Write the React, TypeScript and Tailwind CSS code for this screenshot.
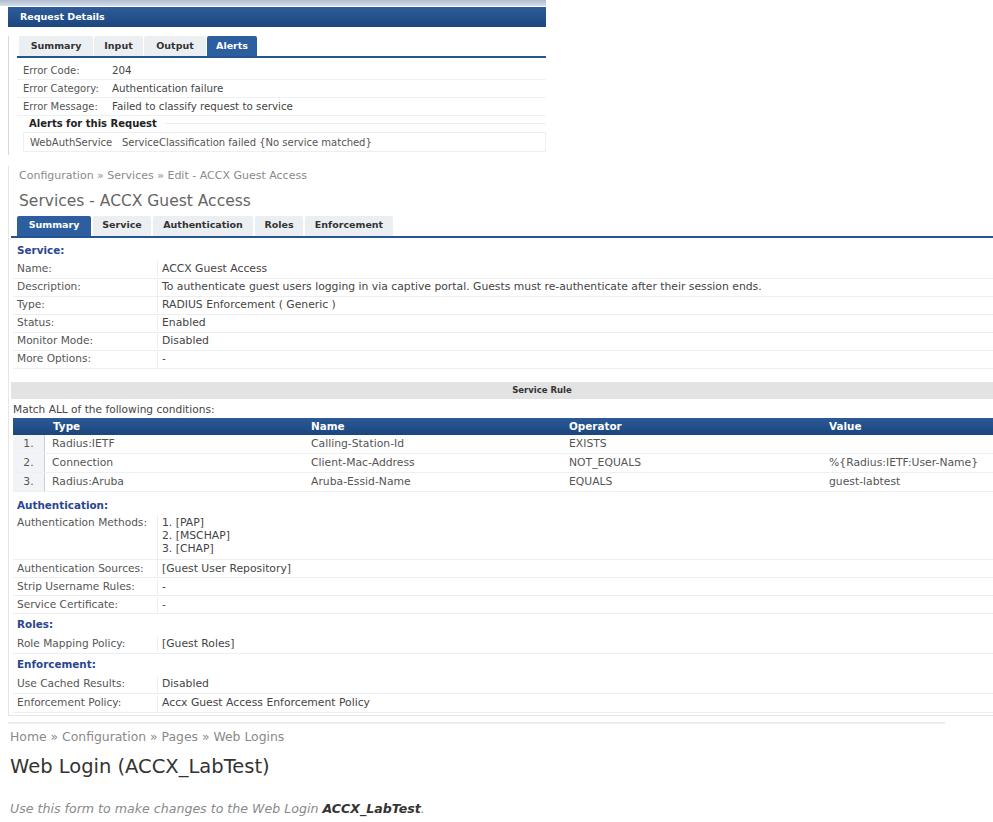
import React from "react";

const font = { fontFamily: '"DejaVu Sans", Verdana, sans-serif' };

function Tab({ label, active, w }: { label: string; active?: boolean; w: string }) {
  return (
    <div
      className={`${w} flex h-full items-center justify-center rounded-t-[2px] text-[9.5px] font-bold ${
        active ? "bg-[#2d5e9f] text-white" : "bg-[#eceff2] text-[#333]"
      }`}
    >
      {label}
    </div>
  );
}

function AlertRow({ label, value }: { label: string; value: string }) {
  return (
    <div className="flex h-[18px] items-center border-b border-[#eef0f2] text-[10px] text-[#555]">
      <div className="w-[95px] pl-[6px]">{label}</div>
      <div className="text-[10.3px] text-[#444]">{value}</div>
    </div>
  );
}

function KV({
  label,
  children,
  tall,
  h = "h-[18px]",
}: {
  label: string;
  children: React.ReactNode;
  tall?: boolean;
  h?: string;
}) {
  return (
    <div className={`flex border-b border-[#eceef0] text-[10.6px] text-[#555] ${tall ? "" : `${h} items-center`}`}>
      <div className={`w-[144px] shrink-0 pl-[4px] ${tall ? "pt-[1px] leading-[13px]" : ""}`}>{label}</div>
      <div
        className={`flex-1 border-l border-[#eceef0] pl-[4px] text-[10.8px] text-[#444] ${
          tall ? "pt-[1px] pb-[4px] leading-[13px]" : ""
        }`}
      >
        {children}
      </div>
    </div>
  );
}

function Heading({ children, h = "h-[20px]" }: { children: React.ReactNode; h?: string }) {
  return (
    <div className={`flex ${h} items-center pl-[4px] text-[10.4px] font-bold text-[#2b4590]`}>{children}</div>
  );
}

const rules = [
  ["1.", "Radius:IETF", "Calling-Station-Id", "EXISTS", ""],
  ["2.", "Connection", "Client-Mac-Address", "NOT_EQUALS", "%{Radius:IETF:User-Name}"],
  ["3.", "Radius:Aruba", "Aruba-Essid-Name", "EQUALS", "guest-labtest"],
];

export default function App() {
  return (
    <div className="h-[822px] w-[993px] overflow-hidden bg-white" style={font}>
      {/* Request details panel */}
      <div className="w-[546px]">
        <div className="h-[6px] bg-gradient-to-b from-[#aebcd0] to-[#d5dde8]" />
        <div className="ml-[8px] mt-[1px] flex h-[20px] items-center bg-gradient-to-b from-[#2f5c9a] to-[#1b467f] pl-[12px] text-[9.5px] font-bold text-white">
          Request Details
        </div>
        <div className="ml-[8px] border-l border-[#d5dae1] pb-[3px] pl-[8px]">
          <div className="mt-[9px] flex h-[20px] items-end gap-[1px] pl-[2px]">
            <Tab label="Summary" w="w-[74px]" />
            <Tab label="Input" w="w-[49px]" />
            <Tab label="Output" w="w-[62px]" />
            <Tab label="Alerts" w="w-[50px]" active />
          </div>
          <div className="h-[2px] bg-[#26548f]" />
          <div className="pt-[4px]">
            <AlertRow label="Error Code:" value="204" />
            <AlertRow label="Error Category:" value="Authentication failure" />
            <AlertRow label="Error Message:" value="Failed to classify request to service" />
          </div>
          <div className="flex h-[14px] items-center gap-2 pl-[12px] text-[10px] font-bold text-[#222]">
            Alerts for this Request
            <div className="h-px flex-1 bg-[#eceef0]" />
          </div>
          <div className="ml-[6px] mt-[2px] flex h-[20px] items-center border border-[#eceef0] pl-[6px] text-[10px] text-[#555]">
            <span className="w-[92px]">WebAuthService</span>
            <span>ServiceClassification failed {"{"}No service matched{"}"}</span>
          </div>
        </div>
      </div>

      {/* Services summary */}
      <div className="ml-[8px] mt-[11px] border-l border-[#e3e6ea]">
        <div className="pl-[10px] pt-[2px] text-[11px] text-[#8a8a8a]">
          Configuration » Services » Edit - ACCX Guest Access
        </div>
        <div className="pl-[10px] pt-[6px] text-[15.5px] leading-[20px] text-[#666]">
          Services - ACCX Guest Access
        </div>
        <div className="mt-[5px] flex h-[20px] items-end gap-[2px] pl-[8px]">
          <Tab label="Summary" w="w-[74px]" active />
          <Tab label="Service" w="w-[58px]" />
          <Tab label="Authentication" w="w-[100px]" />
          <Tab label="Roles" w="w-[48px]" />
          <Tab label="Enforcement" w="w-[88px]" />
        </div>
        <div className="ml-[2px] h-[2px] bg-[#26548f]" />
        <div className="pl-[4px] pt-[3px]">
          <Heading>Service:</Heading>
          <KV label="Name:">ACCX Guest Access</KV>
          <KV label="Description:">
            To authenticate guest users logging in via captive portal. Guests must re-authenticate after their session ends.
          </KV>
          <KV label="Type:">RADIUS Enforcement ( Generic )</KV>
          <KV label="Status:">Enabled</KV>
          <KV label="Monitor Mode:">Disabled</KV>
          <KV label="More Options:">-</KV>
        </div>
        <div className="ml-[2px] mt-[13px] flex h-[17px] items-center justify-center bg-[#e3e3e3] pl-[80px] text-[8.5px] font-bold text-[#333]">
          Service Rule
        </div>
        <div className="pl-[4px] pt-[3px] text-[10.6px] text-[#444]">Match ALL of the following conditions:</div>
        <div className="ml-[4px] mt-[1px]">
          <div className="flex h-[17px] items-center bg-gradient-to-b from-[#2c5a97] to-[#1b457d] text-[10.4px] font-bold text-white">
            <div className="w-[32px]" />
            <div className="w-[261px] pl-[8px]">Type</div>
            <div className="w-[258px] pl-[5px]">Name</div>
            <div className="w-[259px] pl-[5px]">Operator</div>
            <div className="flex-1 pl-[6px]">Value</div>
          </div>
          {rules.map((r) => (
            <div key={r[0]} className="flex h-[19px] items-center border-b border-[#eef0f2] text-[10.8px] text-[#555]">
              <div className="flex h-full w-[32px] items-center justify-center border-r border-[#c9d0da] bg-[#f1f3f7]">
                {r[0]}
              </div>
              <div className="w-[261px] pl-[7px]">{r[1]}</div>
              <div className="w-[258px] pl-[5px]">{r[2]}</div>
              <div className="w-[259px] pl-[5px]">{r[3]}</div>
              <div className="flex-1 pl-[6px]">{r[4]}</div>
            </div>
          ))}
        </div>
        <div className="mt-[3px] border-b border-[#e3e6ea] pb-[2px] pl-[4px]">
          <Heading>Authentication:</Heading>
          <KV label="Authentication Methods:" tall>
            <div>1. [PAP]</div>
            <div>2. [MSCHAP]</div>
            <div>3. [CHAP]</div>
          </KV>
          <KV label="Authentication Sources:">[Guest User Repository]</KV>
          <KV label="Strip Username Rules:">-</KV>
          <KV label="Service Certificate:">-</KV>
          <Heading h="h-[21px]">Roles:</Heading>
          <KV label="Role Mapping Policy:" h="h-[19px]">
            [Guest Roles]
          </KV>
          <Heading h="h-[21px]">Enforcement:</Heading>
          <KV label="Use Cached Results:" h="h-[19px]">
            Disabled
          </KV>
          <KV label="Enforcement Policy:" h="h-[19px]">
            Accx Guest Access Enforcement Policy
          </KV>
        </div>
      </div>

      {/* Web login */}
      <div className="ml-[8px] mt-[6px] h-[2px] w-[937px] bg-[#ececec]" />
      <div className="pl-[10px]">
        <div className="pt-[5px] text-[12.4px] leading-[16px] text-[#8a8a8a]">
          Home » Configuration » Pages » Web Logins
        </div>
        <div className="pt-[10px] text-[19.5px] leading-[24px] text-[#333]">Web Login (ACCX_LabTest)</div>
        <div className="pt-[21px] text-[12.6px] italic text-[#8a8a8a]">
          Use this form to make changes to the Web Login <span className="font-bold text-[#333]">ACCX_LabTest</span>.
        </div>
      </div>
    </div>
  );
}
